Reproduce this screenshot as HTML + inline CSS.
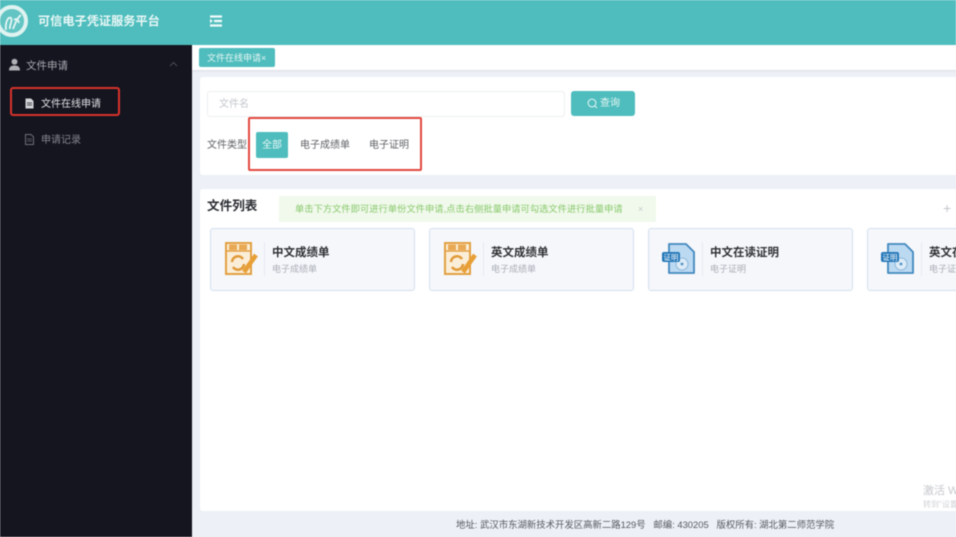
<!DOCTYPE html>
<html lang="zh"><head><meta charset="utf-8"><style>
html{margin:0;padding:0;background:#edf0f6}
body{margin:0;padding:0;width:956px;height:537px;overflow:hidden;position:relative;background:#edf0f6;font-family:"Liberation Sans","Noto Sans CJK SC",sans-serif;font-size:11px;color:#606266;filter:blur(.45px)}
.a{position:absolute;white-space:nowrap}
.card{position:absolute;top:228px;width:203px;height:61px;background:#f5f7fb;border:1px solid #d3e0ee;border-radius:3px}
.card .sep{position:absolute;left:53px;top:13px;width:1px;height:34px;background:#e6eaf1}
.card .t{position:absolute;left:61px;top:15px;font-size:11.5px;font-weight:700;color:#303133;white-space:nowrap;line-height:18px}
.card .s{position:absolute;left:61px;top:33px;font-size:9px;color:#a9adb5;white-space:nowrap;line-height:14px}
.card svg{position:absolute;left:13px;top:12px}
</style></head><body>
<div class="a" style="left:0;top:0;width:956px;height:45px;background:#4fbdbd"></div>
<svg class="a" style="left:-5px;top:3px" width="36" height="36" viewBox="0 0 36 36"><circle cx="17" cy="18" r="14" fill="#62c4c3" stroke="#dff3f1" stroke-width="4"/><path d="M11 27C10 20 13 13 16 15C18 18 14 22 15 26M18 26C20 21 22 15 26 12M19 17C21 15 23 16 24 20" fill="none" stroke="#e6f6f4" stroke-width="1.8"/></svg>
<div class="a" style="left:38px;top:13px;font-size:12.2px;font-weight:700;color:#e8f7f6;line-height:17px">可信电子凭证服务平台</div>
<svg class="a" style="left:209px;top:15px" width="14" height="12" viewBox="0 0 14 12"><path d="M1 1.5H13M5 6H13M1 10.5H13" stroke="#f2fbfb" stroke-width="2.2"/><path d="M1 3.8L3.8 6L1 8.2Z" fill="#f2fbfb"/></svg>

<div class="a" style="left:0;top:45px;width:192px;height:492px;background:#14151f"></div>
<svg class="a" style="left:8px;top:58px" width="13" height="13" viewBox="0 0 13 13"><circle cx="6.5" cy="3.8" r="3" fill="#aeb0b6"/><path d="M1 12.5C1 8.5 3.5 7.5 6.5 7.5S12 8.5 12 12.5Z" fill="#aeb0b6"/></svg>
<div class="a" style="left:26px;top:58px;font-size:10.5px;color:#a8aab0;line-height:16px">文件申请</div>
<svg class="a" style="left:169px;top:61px" width="9" height="6" viewBox="0 0 9 6"><path d="M1 5L4.5 1.5L8 5" fill="none" stroke="#4a4c55" stroke-width="1"/></svg>
<div class="a" style="left:10px;top:87px;width:106px;height:25px;border:2px solid #d9322a;border-radius:3px"></div>
<svg class="a" style="left:25px;top:98px" width="9" height="11" viewBox="0 0 9 11"><path d="M.5.5H6L8.5 3V10.5H.5Z" fill="#d4d5d8"/><path d="M2 5H7M2 7H7" stroke="#14151f" stroke-width=".8"/></svg>
<div class="a" style="left:41px;top:97px;font-size:10px;color:#e2e3e6;line-height:16px">文件在线申请</div>
<svg class="a" style="left:25px;top:134px" width="9" height="11" viewBox="0 0 9 11"><path d="M.5.5H6L8.5 3V10.5H.5Z" fill="none" stroke="#6d6f77"/><path d="M2 5H7M2 7H7" stroke="#6d6f77" stroke-width=".8"/></svg>
<div class="a" style="left:41px;top:133px;font-size:10px;color:#85878e;line-height:16px">申请记录</div>

<div class="a" style="left:192px;top:45px;width:764px;height:25px;background:#fff;box-shadow:0 1px 2px rgba(0,0,0,.08)"></div>
<div class="a" style="left:199px;top:48px;width:76px;height:19px;background:#4fbdbd;border-radius:2px;color:#e6f6f5;font-size:9px;line-height:20px;text-indent:8px">文件在线申请×</div>

<div class="a" style="left:200px;top:77px;width:756px;height:98px;background:#fff;border-radius:3px 0 0 3px"></div>
<div class="a" style="left:207px;top:91px;width:356px;height:24px;background:#fff;border:1px solid #eceef2;border-radius:3px"></div>
<div class="a" style="left:219px;top:98px;font-size:10px;color:#c4c7cd;line-height:14px">文件名</div>
<div class="a" style="left:571px;top:91px;width:64px;height:25px;background:#4fbdbd;border-radius:3px"></div>
<svg class="a" style="left:587px;top:98px" width="11" height="11" viewBox="0 0 11 11"><circle cx="5" cy="5" r="3.9" fill="none" stroke="#e6f6f5"/><path d="M8 8L10 10" stroke="#e6f6f5"/></svg>
<div class="a" style="left:600px;top:97px;font-size:10px;color:#e6f6f5;line-height:14px">查询</div>
<div class="a" style="left:207px;top:139px;font-size:10px;color:#606266;line-height:14px">文件类型</div>
<div class="a" style="left:256px;top:132px;width:32px;height:26px;background:#4fbdbd;border-radius:2px;color:#eaf8f7;font-size:10px;line-height:27px;text-align:center">全部</div>
<div class="a" style="left:300px;top:139px;font-size:10px;color:#606266;line-height:14px">电子成绩单</div>
<div class="a" style="left:369px;top:139px;font-size:10px;color:#606266;line-height:14px">电子证明</div>
<div class="a" style="left:248px;top:117px;width:170px;height:50px;border:2px solid #e2483f;border-radius:2px"></div>

<div class="a" style="left:200px;top:189px;width:756px;height:322px;background:#fff;border-radius:3px 0 0 3px"></div>
<div class="a" style="left:207px;top:197px;font-size:12.6px;font-weight:700;color:#2b2d33;line-height:19px">文件列表</div>
<div class="a" style="left:279px;top:196px;width:377px;height:26px;background:#f0f9eb;border-radius:2px"></div>
<div class="a" style="left:295px;top:202px;font-size:9.2px;color:#86c76a;line-height:15px;letter-spacing:.1px">单击下方文件即可进行单份文件申请,点击右侧批量申请可勾选文件进行批量申请</div>
<div class="a" style="left:638px;top:202px;font-size:9px;color:#c6c9cf;line-height:14px">×</div>
<div class="a" style="left:943px;top:200px;font-size:14px;color:#c3c6cc;line-height:17px">+</div>

<div class="card" style="left:210px"><svg width="34" height="36" viewBox="0 0 34 36"><path d="M2 2H27V33H2Z" fill="#fbeed8" stroke="#e39f42" stroke-width="2"/><path d="M2 10H27" stroke="#e39f42" stroke-width="1.6"/><rect x="5" y="3.5" width="8" height="5.5" fill="#e9a954"/><rect x="15" y="3.5" width="8" height="5.5" fill="#e9a954"/><path d="M8 21A6 6 0 0 1 19 18M20 23A6 6 0 0 1 9 26" fill="none" stroke="#e09a38" stroke-width="2.6"/><path d="M20 31L32 14" stroke="#e89f36" stroke-width="4.6"/></svg><div class="sep"></div><div class="t">中文成绩单</div><div class="s">电子成绩单</div></div>
<div class="card" style="left:429px"><svg width="34" height="36" viewBox="0 0 34 36"><path d="M2 2H27V33H2Z" fill="#fbeed8" stroke="#e39f42" stroke-width="2"/><path d="M2 10H27" stroke="#e39f42" stroke-width="1.6"/><rect x="5" y="3.5" width="8" height="5.5" fill="#e9a954"/><rect x="15" y="3.5" width="8" height="5.5" fill="#e9a954"/><path d="M8 21A6 6 0 0 1 19 18M20 23A6 6 0 0 1 9 26" fill="none" stroke="#e09a38" stroke-width="2.6"/><path d="M20 31L32 14" stroke="#e89f36" stroke-width="4.6"/></svg><div class="sep"></div><div class="t">英文成绩单</div><div class="s">电子成绩单</div></div>
<div class="card" style="left:648px"><svg width="34" height="36" viewBox="0 0 34 36"><path d="M7 3H24L32 11V32H7Z" fill="#bcd9f2" stroke="#4188bd" stroke-width="1.8" stroke-linejoin="round"/><circle cx="20" cy="23" r="6" fill="#dcebf7" stroke="#8db7d8"/><circle cx="20" cy="23" r="1.4" fill="#4f90c2"/><rect x="0" y="11" width="18" height="10" rx="2" fill="#2477b8"/><text x="1.5" y="19.2" font-size="7.5" fill="#fff" font-family="Noto Sans CJK SC">证明</text></svg><div class="sep"></div><div class="t">中文在读证明</div><div class="s">电子证明</div></div>
<div class="card" style="left:867px"><svg width="34" height="36" viewBox="0 0 34 36"><path d="M7 3H24L32 11V32H7Z" fill="#bcd9f2" stroke="#4188bd" stroke-width="1.8" stroke-linejoin="round"/><circle cx="20" cy="23" r="6" fill="#dcebf7" stroke="#8db7d8"/><circle cx="20" cy="23" r="1.4" fill="#4f90c2"/><rect x="0" y="11" width="18" height="10" rx="2" fill="#2477b8"/><text x="1.5" y="19.2" font-size="7.5" fill="#fff" font-family="Noto Sans CJK SC">证明</text></svg><div class="sep"></div><div class="t">英文在读证明</div><div class="s">电子证明</div></div>

<div class="a" style="left:923px;top:484px;font-size:11px;color:#c5c7cb;line-height:14px">激活 W</div>
<div class="a" style="left:923px;top:499px;font-size:8px;color:#d0d2d6;line-height:11px">转到"设置"</div>
<div class="a" style="left:456px;top:517px;font-size:9.4px;color:#55585f;line-height:15px">地址: 武汉市东湖新技术开发区高新二路129号&nbsp;&nbsp;&nbsp;邮编: 430205&nbsp;&nbsp;&nbsp;版权所有: 湖北第二师范学院</div>
</body></html>
